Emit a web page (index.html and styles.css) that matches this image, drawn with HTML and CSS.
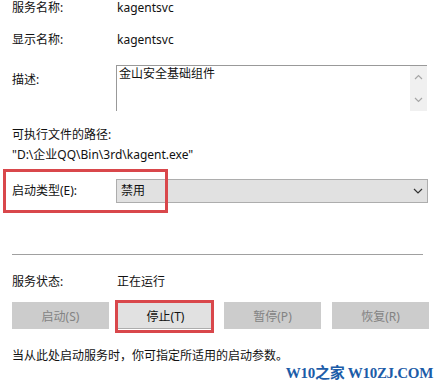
FILE: index.html
```html
<!DOCTYPE html>
<html lang="zh-CN">
<head>
    <meta charset="UTF-8">
    <title>kagentsvc 属性</title>
    <link rel="stylesheet" href="styles.css">
</head>
<body>
    <div class="dialog">
        <!-- 基本信息 -->
        <div class="row row-name">
            <span class="label">服务名称:</span>
            <span class="value">kagentsvc</span>
        </div>
        <div class="row row-display">
            <span class="label">显示名称:</span>
            <span class="value">kagentsvc</span>
        </div>
        <div class="row row-desc">
            <span class="label label-desc">描述:</span>
            <div class="desc-box">
                <div class="desc-text">金山安全基础组件</div>
                <div class="scrollbar">
                    <svg width="9" height="6" viewBox="0 0 9 6"><path d="M1 5 L4.5 1.5 L8 5" fill="none" stroke="#a6a6a6" stroke-width="1.2"/></svg>
                    <svg width="9" height="6" viewBox="0 0 9 6"><path d="M1 1 L4.5 4.5 L8 1" fill="none" stroke="#a6a6a6" stroke-width="1.2"/></svg>
                </div>
            </div>
        </div>

        <div class="path-title">可执行文件的路径:</div>
        <div class="path">"D:\企业QQ\Bin\3rd\kagent.exe"</div>

        <!-- 启动类型 -->
        <div class="row row-start">
            <span class="label">启动类型(E):</span>
            <div class="select">
                <span>禁用</span>
                <svg width="10" height="6" viewBox="0 0 10 6"><path d="M1 1 L5 5 L9 1" fill="none" stroke="#333" stroke-width="1.2"/></svg>
            </div>
        </div>

        <hr class="sep">

        <div class="row row-status">
            <span class="label">服务状态:</span>
            <span class="value">正在运行</span>
        </div>

        <div class="buttons">
            <button class="btn" disabled>启动(S)</button>
            <button class="btn btn-active">停止(T)</button>
            <button class="btn" disabled>暂停(P)</button>
            <button class="btn" disabled>恢复(R)</button>
        </div>

        <div class="hint">当从此处启动服务时，你可指定所适用的启动参数。</div>

        <!-- 标注框 -->
        <div class="mark mark-start"></div>
        <div class="mark mark-stop"></div>

        <div class="watermark">W10之家 W10ZJ.COM</div>
    </div>
</body>
</html>
```

FILE: styles.css
```css
/* 通用 */
body {
    margin: 0;
    padding: 0;
    background-color: #fff;
    font-family: "Noto Sans", "Noto Sans CJK SC", sans-serif;
    font-size: 12px;
    color: #111;
}

.dialog {
    position: relative;
    width: 438px;
    height: 381px;
    padding-left: 12px;
    box-sizing: border-box;
    overflow: hidden;
}

.row {
    display: flex;
    align-items: center;
    height: 16px;
    line-height: 16px;
}

.label {
    width: 104px;
    flex: none;
}

.value {
    padding-left: 1px;
}

.row-name {
    margin-top: 0;
}

.row-display {
    margin-top: 16px;
}

/* 描述 */
.row-desc {
    margin-top: 17px;
    height: 46px;
    align-items: flex-start;
}

.label-desc {
    padding-top: 7px;
}

.desc-box {
    display: flex;
    width: 311px;
    height: 46px;
    box-sizing: border-box;
    border-top: 1px solid #999;
    border-left: 1px solid #999;
}

.desc-text {
    flex: 1;
    padding: 1px 0 0 2px;
    line-height: 14px;
}

.scrollbar {
    width: 17px;
    background-color: #f0f0f0;
    display: flex;
    flex-direction: column;
    align-items: center;
    justify-content: space-between;
    padding: 8px 0 8px;
}

.path-title {
    margin-top: 16px;
    line-height: 16px;
}

.path {
    margin-top: 4px;
    line-height: 16px;
}

/* 启动类型 */
.row-start {
    margin-top: 16px;
    height: 24px;
}

.select {
    width: 312px;
    height: 24px;
    box-sizing: border-box;
    background-color: #e1e1e1;
    border: 1px solid #adadad;
    display: flex;
    align-items: center;
    justify-content: space-between;
    padding: 0 4px 0 4px;
}

.sep {
    margin: 51px 0 0 0;
    width: 411px;
    border: none;
    border-top: 1px solid #a0a0a0;
    height: 0;
}

.row-status {
    margin-top: 19px;
}

/* 按钮 */
.buttons {
    display: flex;
    margin-top: 12px;
}

.btn {
    width: 97px;
    height: 27px;
    margin-right: 8px;
    border: 1px solid #cccccc;
    background-color: #cccccc;
    color: #838383;
    font-family: "Noto Sans", "Noto Sans CJK SC", sans-serif;
    font-size: 12px;
    padding: 0;
}

.btn:nth-child(3) {
    margin-left: 2px;
}

.btn:nth-child(4) {
    margin-left: 3px;
}

.btn-active {
    background-color: #e1e1e1;
    border-color: #adadad;
    color: #111;
}

.hint {
    margin-top: 19px;
    line-height: 16px;
}

/* 红色标注 */
.mark {
    position: absolute;
    border: 3px solid #d9474b;
    box-sizing: border-box;
}

.mark-start {
    left: 3px;
    top: 169px;
    width: 165px;
    height: 44px;
}

.mark-stop {
    left: 115px;
    top: 300px;
    width: 99px;
    height: 33px;
}

.watermark {
    position: absolute;
    right: 5px;
    top: 361px;
    font-family: "Liberation Serif", "Noto Sans CJK SC", serif;
    font-weight: bold;
    font-size: 15px;
    letter-spacing: -0.3px;
    color: #1c5ca8;
    white-space: nowrap;
}
```
